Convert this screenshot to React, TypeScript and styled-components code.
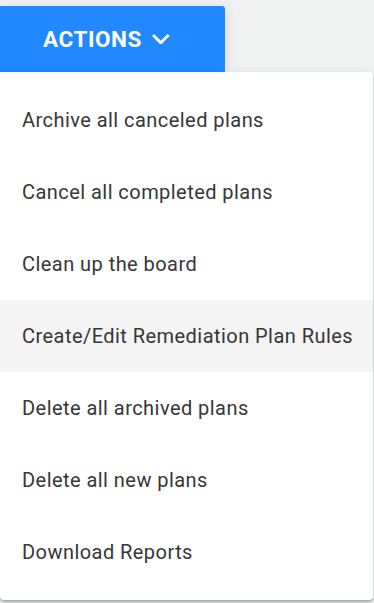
import React from "react";
import styled, { createGlobalStyle } from "styled-components";

const Global = createGlobalStyle`
  html, body { margin: 0; padding: 0; background: #eff2f1; }
  body { font-family: Roboto, "Liberation Sans", Arial, sans-serif; overflow: hidden; }
`;

const Page = styled.div`
  display: flex;
  flex-direction: column;
  align-items: flex-start;
  padding-top: 6px;
  height: 597px;
`;

const ActionButton = styled.button`
  display: flex;
  align-items: center;
  width: 225px;
  height: 66px;
  padding: 0 0 0 43px;
  margin: 0;
  border: none;
  border-radius: 0 3px 0 0;
  background: #2188ff;
  color: #ffffff;
  font-family: Roboto, "Liberation Sans", Arial, sans-serif;
  font-weight: 700;
  font-size: 22.5px;
  letter-spacing: 0.55px;
  cursor: pointer;
  box-shadow: 4px 0 10px rgba(0, 0, 0, 0.06);
  position: relative;
  z-index: 1;
`;

const Chevron = styled.svg`
  margin-left: 10px;
  width: 17.6px;
  height: 10.9px;
  flex: none;
`;

const Menu = styled.ul`
  list-style: none;
  margin: 0;
  padding: 12px 0;
  width: 373px;
  background: #ffffff;
  border-radius: 0 4px 4px 4px;
  box-shadow: 0 2px 3px rgba(0, 0, 0, 0.3), 0 0 8px rgba(0, 0, 0, 0.06);
  position: relative;
  z-index: 2;
`;

const Item = styled.li<{ $active?: boolean }>`
  display: flex;
  align-items: center;
  height: 72px;
  padding-left: 22px;
  font-size: 20px;
  letter-spacing: 0.45px;
  color: #363636;
  background: ${(p) => (p.$active ? "#f4f4f4" : "transparent")};
  cursor: pointer;
`;

const items = [
  "Archive all canceled plans",
  "Cancel all completed plans",
  "Clean up the board",
  "Create/Edit Remediation Plan Rules",
  "Delete all archived plans",
  "Delete all new plans",
  "Download Reports",
];

export default function App() {
  return (
    <>
      <Global />
      <Page>
        <ActionButton>
          ACTIONS
          <Chevron viewBox="6 8.59 12 7.41" aria-hidden="true">
            <path fill="#ffffff" d="M16.59 8.59L12 13.17 7.41 8.59 6 10l6 6 6-6z" />
          </Chevron>
        </ActionButton>
        <Menu>
          {items.map((t, i) => (
            <Item key={t} $active={i === 3}>
              {t}
            </Item>
          ))}
        </Menu>
      </Page>
    </>
  );
}
